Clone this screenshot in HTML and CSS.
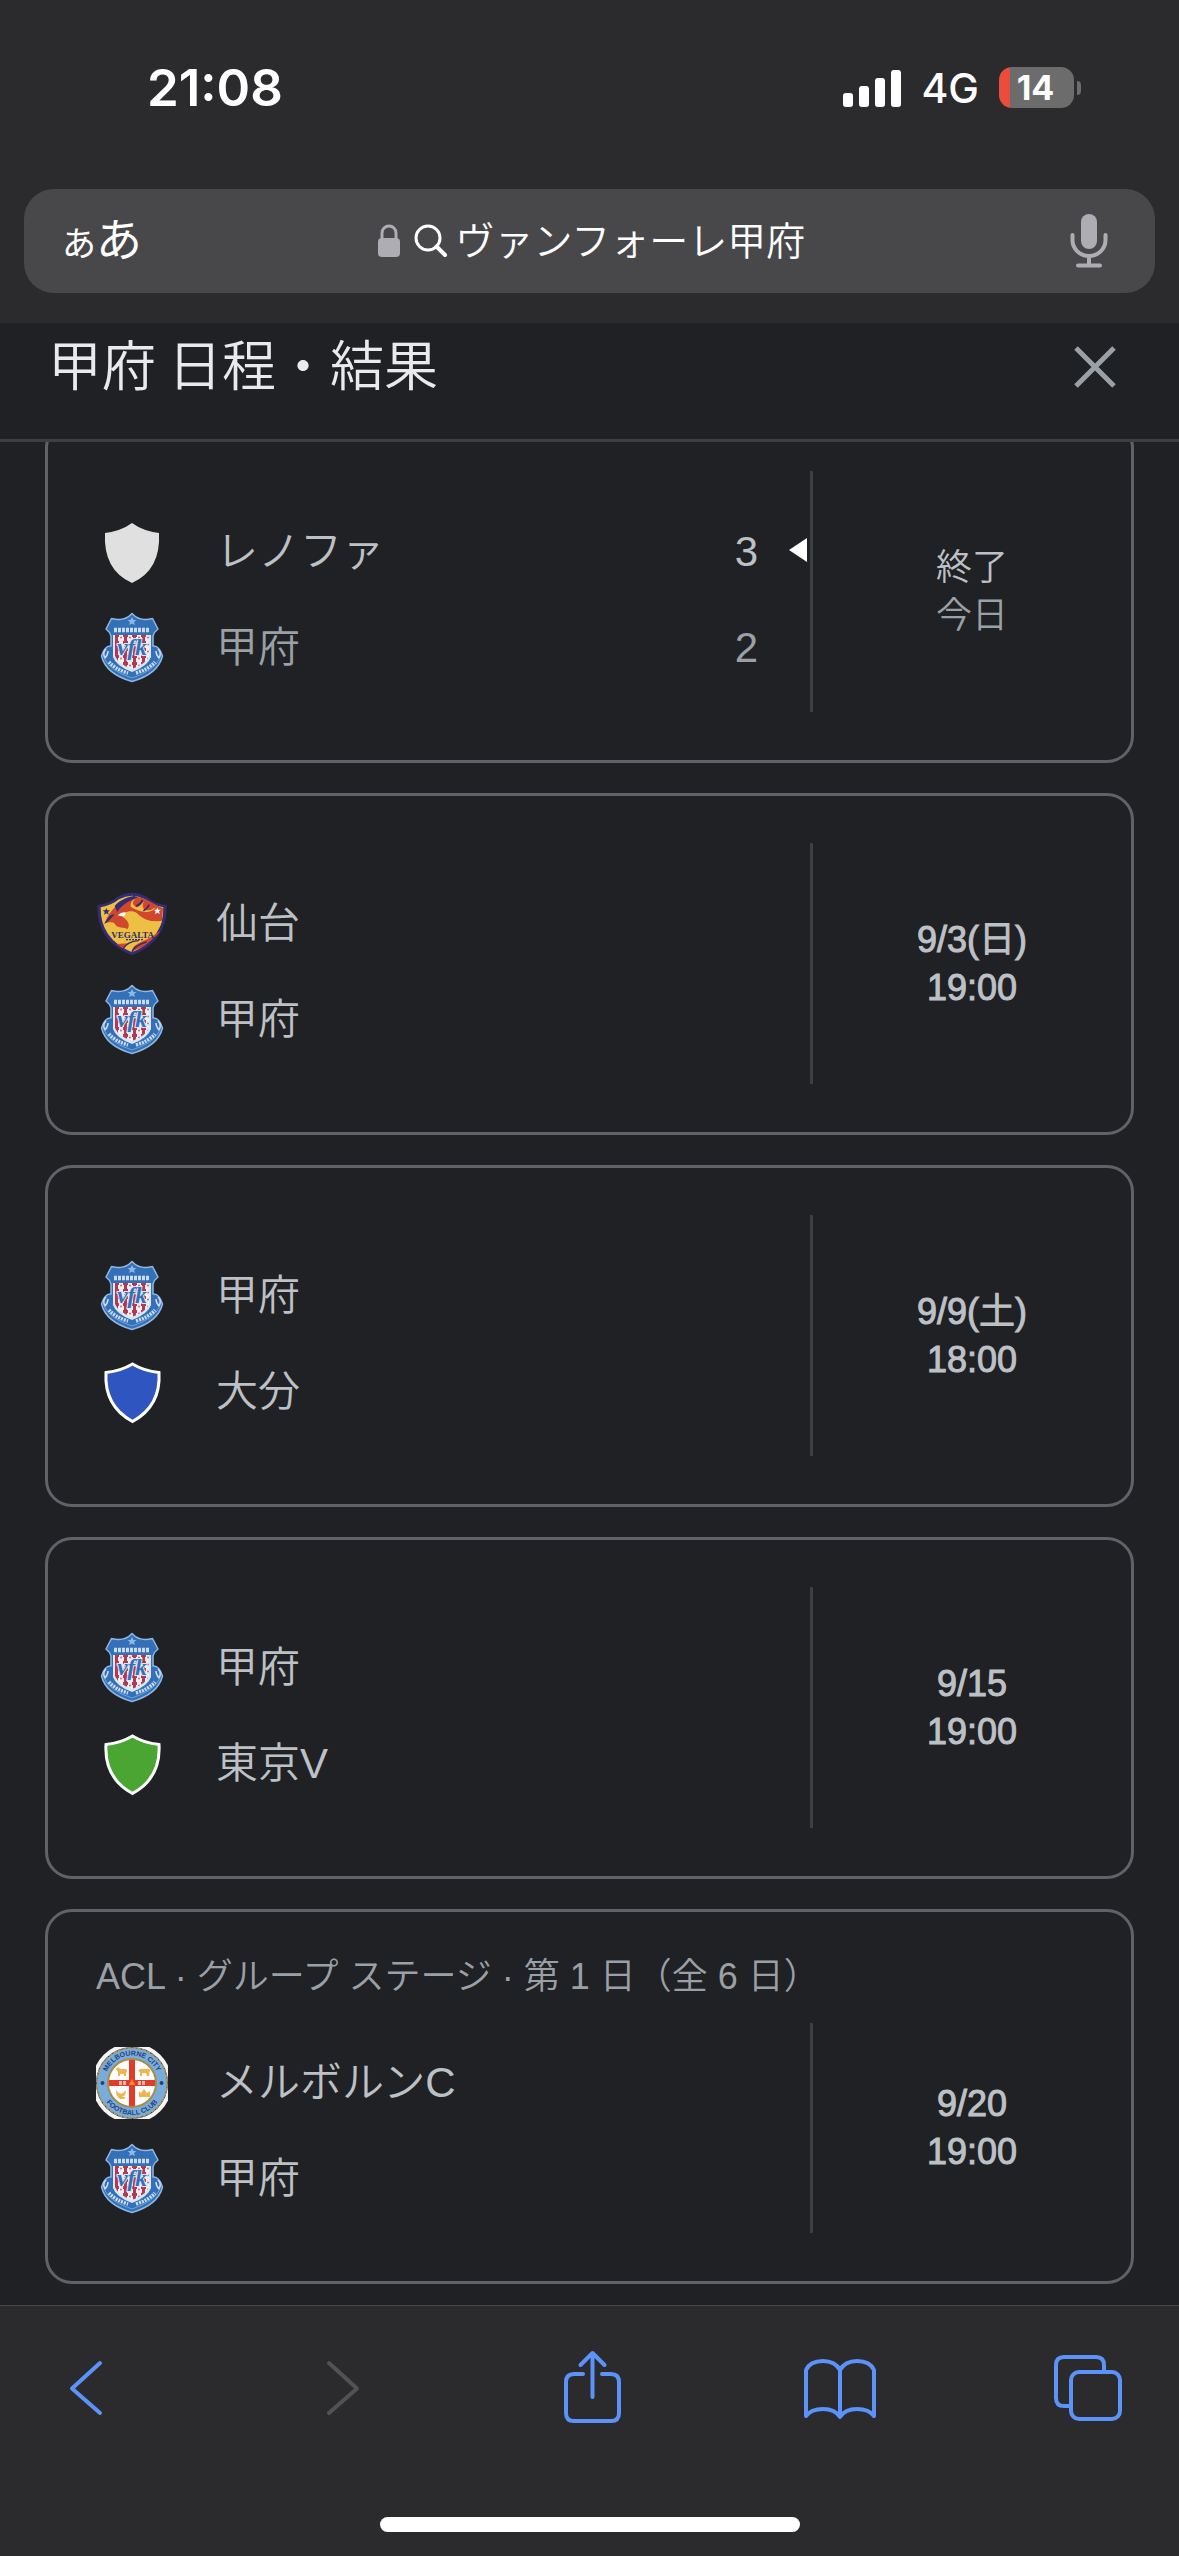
FILE: index.html
```html
<!DOCTYPE html>
<html lang="ja">
<head>
    <meta charset="UTF-8">
    <meta name="viewport" content="width=device-width, initial-scale=1.0">
    <title>甲府 日程・結果</title>
    <link rel="stylesheet" href="styles.css">
</head>
<body>

<!-- エンブレム -->
<svg class="defs" aria-hidden="true">
    <defs>
        <pattern id="check" width="9" height="7" patternUnits="userSpaceOnUse" x="18" y="22">
            <rect width="9" height="7" fill="#f3eef2"/>
            <path d="M0 0h5v3H0zM1 3h3v4H1z" fill="#b23a50"/>
            <circle cx="7" cy="3.500" r="1" fill="#c4697b"/>
        </pattern>
    </defs>
    <symbol id="kofu" viewBox="0 0 72 72">
        <path d="M36 1.500C40 6 47 9 56.500 6.500L62 17Q58 20 57 24V34Q63 33 66.500 44Q62 62 36 69.500Q10 62 5.500 44Q9 33 15 34V24Q14 20 10 17L15.500 6.500C25 9 32 6 36 1.500Z" fill="#3470b8" stroke="#8fb8e4" stroke-width="1.500" stroke-linejoin="round"/>
        <path d="M17 23H55V45Q52 54 36 60Q20 54 17 45Z" fill="#dbe7f5"/>
        <path d="M19 23H53V44Q50 52 36 57Q22 52 19 44Z" fill="url(#check)"/>
        <path d="M18 18H54" stroke="#c9dcf2" stroke-width="4.500" stroke-dasharray="3 1"/>
        <path d="M36 5l1.500 3h3l-2.500 2 1 3-3-1.500-3 1.500 1-3-2.500-2h3z" fill="#8fb8e4"/>
        <path d="M10 37q-4 4-1 9q3-3 3-7M62 37q4 4 1 9q-3-3-3-7" fill="none" stroke="#c9dcf2" stroke-width="1.500"/>
        <path d="M8 46Q14 59 36 66Q58 59 64 46" fill="none" stroke="#6ea3dc" stroke-width="1"/>
        <path d="M13 50Q19 57 32 61M40 61Q53 57 59 50" fill="none" stroke="#c9dcf2" stroke-width="3.500" stroke-dasharray="2 1"/>
        <text x="36" y="43" class="vfk">vfk</text>
    </symbol>
    <symbol id="shield" viewBox="0 0 72 72">
        <path d="M36.500 8Q48 15 63 16.500Q65 50 36.500 65.500Q8 50 10 16.500Q25 15 36.500 8Z" stroke="#fff" stroke-width="3"/>
    </symbol>
    <symbol id="shield-plain" viewBox="0 0 72 72">
        <path d="M36 7Q47 15 63 17Q65 54 36 67Q7 54 9 17Q25 15 36 7Z"/>
    </symbol>
</svg>

<header class="browser-top">
    <div class="status-bar">
        <span class="clock">21:08</span>
        <div class="status-icons">
            <svg class="signal" viewBox="0 0 58 38" aria-hidden="true">
                <rect x="0" y="24" width="10" height="14" rx="3"/>
                <rect x="16" y="17" width="10" height="21" rx="3"/>
                <rect x="32" y="9" width="10" height="29" rx="3"/>
                <rect x="48" y="1" width="10" height="37" rx="3"/>
            </svg>
            <span class="network">4G</span>
            <div class="battery"><span class="battery-body">14</span><span class="battery-tip"></span></div>
        </div>
    </div>
    <div class="address-bar">
        <button class="text-size" aria-label="ページ設定"><span class="small-a">あ</span>あ</button>
        <div class="address">
            <svg class="lock" viewBox="0 0 22 34" aria-hidden="true">
                <path d="M4 16V9a7 7 0 0 1 14 0v7" fill="none" stroke="#aeadb4" stroke-width="3"/>
                <rect x="0" y="14" width="22" height="19" rx="4" fill="#aeadb4"/>
            </svg>
            <label for="query" class="search-label" aria-label="検索">
                <svg viewBox="0 0 34 34" aria-hidden="true">
                    <circle cx="14" cy="14" r="12" fill="none" stroke="#fff" stroke-width="3"/>
                    <path d="M22.500 22.500L31 31" stroke="#fff" stroke-width="4" stroke-linecap="round"/>
                </svg>
            </label>
            <input type="text" id="query" value="ヴァンフォーレ甲府">
        </div>
        <button class="mic" aria-label="音声入力">
            <svg viewBox="0 0 38 56" aria-hidden="true">
                <rect x="11" y="1" width="16" height="35" rx="8" fill="#aeadb4"/>
                <path d="M2.500 22v5a16.500 16 0 0 0 33 0v-5M19 43v9M8 52.500h22" fill="none" stroke="#aeadb4" stroke-width="4" stroke-linecap="round"/>
            </svg>
        </button>
    </div>
</header>

<div class="panel-header">
    <h1>甲府 日程・結果</h1>
    <button class="close" aria-label="閉じる">
        <svg viewBox="0 0 44 44" aria-hidden="true"><path d="M3 3L41 41M41 3L3 41" stroke="#9aa0a6" stroke-width="5"/></svg>
    </button>
</div>

<main class="matches">
    <article class="match">
        <div class="match-body">
            <div class="teams">
                <div class="team winner"><svg class="logo" fill="#e0e0e0"><use href="#shield-plain"/></svg><span class="name">レノファ</span><span class="score">3</span></div>
                <div class="team loser"><svg class="logo"><use href="#kofu"/></svg><span class="name">甲府</span><span class="score">2</span></div>
            </div>
            <div class="when"><span>終了</span><span class="day">今日</span></div>
        </div>
    </article>

    <article class="match">
        <div class="match-body">
            <div class="teams">
                <div class="team">
                    <svg class="logo" viewBox="0 0 72 72">
                        <g transform="translate(-16 -18) scale(.3333)">
                            <path d="M52 105Q90 100 112 80Q156 56 200 80Q222 100 260 105Q264 214 156 256Q48 214 52 105Z" fill="#322c74"/>
                            <path d="M62 112Q95 106 117 88Q156 67 195 88Q217 106 250 112Q252 206 156 247Q60 206 62 112Z" fill="#edc043"/>
                            <path d="M74 160C88 118 120 92 162 80C200 82 222 104 249 114L246 152C220 162 190 150 170 128C146 118 134 128 128 138C150 146 152 166 142 178C134 170 110 176 105 162C100 154 86 156 74 160Z" fill="#d1472d"/>
                            <path d="M104 108C118 92 138 82 162 78L174 82C148 92 124 106 112 126ZM72 162l14-22q8-8 18-6l-22 22z" fill="#322c74"/>
                            <path d="M166 86q-16 14 2 26q12 0 24-18q-10 18 4 26q18 4 30-10q-4 14-26 16q-22 0-48-16q-2-18 14-24z" fill="#edc043"/>
                            <path d="M168 108q12-4 20-18M190 122q10-4 18-18" stroke="#322c74" stroke-width="5" fill="none"/>
                            <path d="M130 142Q150 122 176 138Q210 160 246 152Q240 182 214 188L142 180Q156 160 130 142Z" fill="#edc043"/>
                            <path d="M113 136q12-12 26-8l-8 12z" fill="#fff"/>
                            <path d="M216 206Q196 232 154 244Q158 226 188 214Q222 198 240 182Q234 196 216 206ZM110 222l34-2-14 16z" fill="#d1472d"/>
                            <path d="M128 238Q142 214 176 212M156 246Q164 226 200 216" stroke="#322c74" stroke-width="4" fill="none"/>
                            <path d="M79 114l3 7h8l-6 5 2 8-7-4-7 4 2-8-6-5h8z" fill="#322c74"/>
                            <path d="M232 112l3 7h8l-6 5 2 8-7-4-7 4 2-8-6-5h8z" fill="#fff"/>
                            <path d="M138 209h54" stroke="#322c74" stroke-width="4" stroke-dasharray="6 3"/>
                            <text x="158" y="203" class="vegalta-name">VEGALTA</text>
                        </g>
                    </svg>
                    <span class="name">仙台</span>
                </div>
                <div class="team"><svg class="logo"><use href="#kofu"/></svg><span class="name">甲府</span></div>
            </div>
            <div class="when date"><span>9/3(日)</span><span>19:00</span></div>
        </div>
    </article>

    <article class="match">
        <div class="match-body">
            <div class="teams">
                <div class="team"><svg class="logo"><use href="#kofu"/></svg><span class="name">甲府</span></div>
                <div class="team"><svg class="logo" fill="#2f56c0"><use href="#shield"/></svg><span class="name">大分</span></div>
            </div>
            <div class="when date"><span>9/9(土)</span><span>18:00</span></div>
        </div>
    </article>

    <article class="match">
        <div class="match-body">
            <div class="teams">
                <div class="team"><svg class="logo"><use href="#kofu"/></svg><span class="name">甲府</span></div>
                <div class="team"><svg class="logo" fill="#4ba532"><use href="#shield"/></svg><span class="name">東京V</span></div>
            </div>
            <div class="when date"><span>9/15</span><span>19:00</span></div>
        </div>
    </article>

    <article class="match with-stage">
        <p class="stage">ACL · グループ ステージ · 第 1 日（全 6 日）</p>
        <div class="match-body">
            <div class="teams">
                <div class="team">
                    <svg class="logo" viewBox="0 0 72 72">
                        <defs>
                            <path id="arc-top" d="M8.500 36a27.500 27.500 0 0 1 55 0"/>
                            <path id="arc-bottom" d="M4 36a32 32 0 0 0 64 0"/>
                        </defs>
                        <circle cx="36" cy="36" r="40" fill="#f4f4f6"/>
                        <circle cx="36" cy="36" r="36" fill="#1f2c5c"/>
                        <circle cx="36" cy="36" r="35" fill="#78addb" stroke="#b59a55" stroke-width="1.500" stroke-dasharray="4 1"/>
                        <circle cx="36" cy="36" r="24" fill="#fff" stroke="#a98c45" stroke-width="2"/>
                        <path d="M33 13h6v20h20v6H39v20h-6V39H13v-6h20z" fill="#e03c28"/>
                        <path d="M20 22q2-3 4 0h6q2 2 0 4v3h-2v-2h-4v2h-2v-4zM42 24q2-3 6-2 4-1 6 1l-1 6h-2l-1-3h-4v3h-2v-4zM20 43q3 5 7 3l3-3q0 6-4 7h4l-2 2h-4q-5-4-4-9zM43 50v-6l2 2 3-4 3 4 3-2v6z" fill="#f0b450"/>
                        <path d="M36 32l3 6h-6z" fill="#f08a3a"/>
                        <path d="M23 36h8M42 36h7" stroke="#f6b9b0" stroke-width="4" stroke-dasharray="3 1"/>
                        <circle cx="6.500" cy="36" r="2" fill="#26407e"/>
                        <circle cx="65.500" cy="36" r="2" fill="#26407e"/>
                        <text class="ring"><textPath href="#arc-top" startOffset="50%">MELBOURNE CITY</textPath></text>
                        <text class="ring"><textPath href="#arc-bottom" startOffset="50%">FOOTBALL CLUB</textPath></text>
                    </svg>
                    <span class="name">メルボルンC</span>
                </div>
                <div class="team"><svg class="logo"><use href="#kofu"/></svg><span class="name">甲府</span></div>
            </div>
            <div class="when date"><span>9/20</span><span>19:00</span></div>
        </div>
    </article>
</main>

<footer class="browser-bottom">
    <nav class="toolbar">
        <button aria-label="戻る"><svg viewBox="0 0 76 76"><path d="M43 13L15 38.500L43 63"/></svg></button>
        <button aria-label="進む" disabled><svg viewBox="0 0 76 76"><path d="M24 13L52 38.500L24 63"/></svg></button>
        <button aria-label="共有"><svg viewBox="0 0 76 76"><path d="M29 24H20q-8 0-8 8V63q0 8 8 8H57q8 0 8-8V32q0-8-8-8H48M38.500 47V4M26.500 15L38.500 3L50.500 15"/></svg></button>
        <button aria-label="ブックマーク"><svg viewBox="0 0 76 76"><path d="M38 20Q33 11 21 11Q8 11 4 20V66Q9 59 21 59Q33 59 38 67Q43 59 55 59Q67 59 72 66V20Q68 11 55 11Q43 11 38 20V66"/></svg></button>
        <button aria-label="タブ"><svg viewBox="0 0 76 76"><path d="M21 56H14q-8 0-8-8V15q0-8 8-8H46q8 0 8 8V21"/><rect x="21" y="22" width="49" height="47" rx="8"/></svg></button>
    </nav>
    <div class="home-indicator"></div>
</footer>

</body>
</html>
```

FILE: styles.css
```css
* {
    box-sizing: border-box;
    margin: 0;
    padding: 0;
}
body {
    display: flex;
    flex-direction: column;
    min-height: 100vh;
    background-color: #202124;
    color: #bdc1c6;
    font-family: "Liberation Sans", "Noto Sans CJK JP", sans-serif;
    font-weight: 350;
}
button {
    background: none;
    border: none;
    color: inherit;
    font: inherit;
    cursor: pointer;
}
svg {
    display: block;
}
.defs {
    position: absolute;
    width: 0;
    height: 0;
}

/* ステータスバーとアドレスバー */
.browser-top {
    background-color: #2b2b2d;
    color: #fff;
    padding: 0 24px 30px;
}
.status-bar {
    display: flex;
    align-items: center;
    justify-content: space-between;
    height: 189px;
    padding: 0 74px 14px 123px;
    font-family: Inter, sans-serif;
}
.clock {
    font-size: 51px;
    font-weight: 600;
}
.status-icons {
    display: flex;
    align-items: center;
    gap: 20px;
}
.signal {
    width: 58px;
    height: 38px;
    fill: #fff;
}
.network {
    font-size: 41px;
    font-weight: 500;
}
.battery {
    display: flex;
    align-items: center;
    gap: 3px;
}
.battery-body {
    width: 75px;
    height: 41px;
    padding-right: 2px;
    border-radius: 13px;
    background: linear-gradient(to right, #eb4d3d 11px, #6c6c6d 11px);
    font-size: 34px;
    font-weight: 700;
    line-height: 41px;
    text-align: center;
}
.battery-tip {
    width: 4px;
    height: 14px;
    border-radius: 0 4px 4px 0;
    background-color: #6c6c6d;
}
.address-bar {
    display: grid;
    grid-template-columns: 1fr auto 1fr;
    align-items: center;
    height: 104px;
    padding: 0 28px 0 34px;
    border-radius: 30px;
    background-color: #48484a;
    font-family: "Noto Sans CJK JP", sans-serif;
}
.text-size {
    justify-self: start;
    padding: 0 4px 4px;
    font-size: 46px;
    font-weight: 400;
    line-height: 60px;
}
.small-a {
    font-size: 34px;
}
.address {
    display: flex;
    align-items: center;
}
.lock {
    width: 22px;
    height: 34px;
}
.search-label {
    width: 34px;
    margin: 0 8px 0 14px;
}
.address input {
    width: 352px;
    height: 60px;
    padding-bottom: 6px;
    border: none;
    outline: none;
    background: none;
    color: #fff;
    font-family: inherit;
    font-size: 39px;
    font-weight: 350;
}
.mic {
    justify-self: end;
    width: 76px;
}
.mic svg {
    width: 38px;
    height: 56px;
    margin: 0 auto;
}

/* パネル見出し */
.panel-header {
    display: flex;
    justify-content: space-between;
    height: 119px;
    padding: 8px 62px 0 48px;
    border-bottom: 3px solid #3c4043;
}
h1 {
    color: #e8eaed;
    font-family: "Noto Sans CJK JP", sans-serif;
    font-size: 54px;
    font-weight: 350;
    line-height: 64px;
}
.close {
    height: 72px;
}
.close svg {
    width: 44px;
    height: 44px;
}

/* 試合一覧 */
.matches {
    flex: 1;
    display: flex;
    flex-direction: column;
    gap: 30px;
    padding: 0 45px 21px;
    overflow: hidden;
}
.match {
    padding: 47px 0 48px;
    border: 3px solid #5f6368;
    border-radius: 27px;
}
.match:first-child {
    margin-top: -21px;
}
.match-body {
    display: grid;
    grid-template-columns: 1fr 321px;
}
.teams {
    display: grid;
    gap: 24px;
    padding: 45px 52px 28px 48px;
}
.team {
    display: flex;
    align-items: center;
    gap: 48px;
    position: relative;
    height: 72px;
    font-size: 42px;
    line-height: 72px;
}
.logo {
    width: 72px;
    height: 72px;
    flex: none;
}
.name {
    flex: 1;
}
.winner::after {
    content: "";
    position: absolute;
    right: -49px;
    top: 22px;
    border: 12px solid transparent;
    border-left: none;
    border-right: 18px solid #fff;
}
.loser, .day {
    color: #9aa0a6;
}
.when {
    display: flex;
    flex-direction: column;
    align-items: center;
    justify-content: center;
    border-left: 3px solid #3c4043;
    font-size: 36px;
    line-height: 48px;
}
.date {
    -webkit-text-stroke: 1px #bdc1c6;
}
.with-stage {
    padding-top: 41px;
}
.with-stage .teams {
    padding-top: 24px;
    padding-bottom: 18px;
}
.stage {
    margin-bottom: 22px;
    padding-left: 48px;
    color: #9aa0a6;
    font-size: 36px;
    line-height: 48px;
}

/* エンブレム内の文字 */
.vfk {
    fill: #3470b8;
    stroke: #dbe7f5;
    stroke-width: 2px;
    paint-order: stroke;
    font-family: "Liberation Serif", serif;
    font-size: 23px;
    font-style: italic;
    font-weight: 700;
    text-anchor: middle;
}
.vegalta-name {
    fill: #322c74;
    font-family: "Liberation Serif", serif;
    font-size: 27px;
    font-weight: 700;
    text-anchor: middle;
}
.ring {
    fill: #26407e;
    font-size: 7px;
    font-weight: 700;
    text-anchor: middle;
}

/* ツールバー */
.browser-bottom {
    border-top: 1px solid #464648;
    background-color: #2b2b2d;
    padding-bottom: 24px;
}
.toolbar {
    display: flex;
    justify-content: space-between;
    height: 211px;
    padding: 44px 53px 0 57px;
}
.toolbar button {
    width: 76px;
    height: 76px;
}
.toolbar svg {
    width: 76px;
    height: 76px;
    fill: none;
    stroke: #5b93f8;
    stroke-width: 4;
    stroke-linecap: round;
    stroke-linejoin: round;
}
.toolbar button:disabled svg {
    stroke: #525254;
}
.home-indicator {
    width: 420px;
    height: 15px;
    margin: 0 auto;
    border-radius: 8px;
    background-color: #fff;
}
```
